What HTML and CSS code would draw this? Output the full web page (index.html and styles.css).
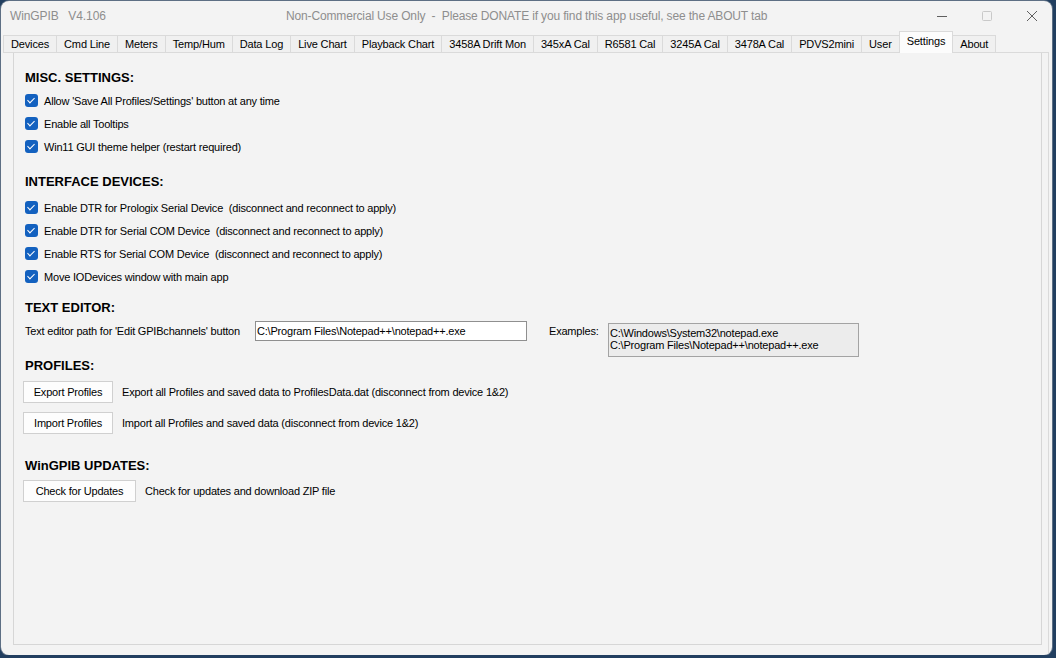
FILE: index.html
```html
<!DOCTYPE html>
<html lang="en">

<head>
    <meta charset="UTF-8">
    <meta name="viewport" content="width=device-width, initial-scale=1.0">
    <link rel="stylesheet" href="styles.css">
    <title>WinGPIB Settings</title>
</head>

<body>

    <div class="window">

        <div class="titlebar">
            <span class="app-title">WinGPIB   V4.106</span>
            <span class="notice">Non-Commercial Use Only  -  Please DONATE if you find this app useful, see the ABOUT tab</span>
            <div class="controls">
                <span class="ctl">
                    <svg width="12" height="12" viewBox="0 0 12 12"><path d="M1 6.5h10" stroke="#5f5f5f" stroke-width="1" /></svg>
                </span>
                <span class="ctl">
                    <svg width="12" height="12" viewBox="0 0 12 12"><rect x="1.5" y="1.5" width="9" height="9" rx="1" fill="none" stroke="#c9c9c9" stroke-width="1" /></svg>
                </span>
                <span class="ctl">
                    <svg width="12" height="12" viewBox="0 0 12 12"><path d="M1 1l10 10M11 1L1 11" stroke="#5f5f5f" stroke-width="1" /></svg>
                </span>
            </div>
        </div>

        <div class="tabs">
            <span class="tab">Devices</span>
            <span class="tab">Cmd Line</span>
            <span class="tab">Meters</span>
            <span class="tab">Temp/Hum</span>
            <span class="tab">Data Log</span>
            <span class="tab">Live Chart</span>
            <span class="tab">Playback Chart</span>
            <span class="tab">3458A Drift Mon</span>
            <span class="tab">345xA Cal</span>
            <span class="tab">R6581 Cal</span>
            <span class="tab">3245A Cal</span>
            <span class="tab">3478A Cal</span>
            <span class="tab">PDVS2mini</span>
            <span class="tab">User</span>
            <span class="tab active">Settings</span>
            <span class="tab">About</span>
        </div>

        <div class="tabpage">
            <div class="panel">

                <h2 class="section first">MISC. SETTINGS:</h2>
                <ul class="checks">
                    <li><span class="cb"></span>Allow 'Save All Profiles/Settings' button at any time</li>
                    <li><span class="cb"></span>Enable all Tooltips</li>
                    <li><span class="cb"></span>Win11 GUI theme helper (restart required)</li>
                </ul>

                <h2 class="section interface">INTERFACE DEVICES:</h2>
                <ul class="checks">
                    <li><span class="cb"></span>Enable DTR for Prologix Serial Device  (disconnect and reconnect to apply)</li>
                    <li><span class="cb"></span>Enable DTR for Serial COM Device  (disconnect and reconnect to apply)</li>
                    <li><span class="cb"></span>Enable RTS for Serial COM Device  (disconnect and reconnect to apply)</li>
                    <li><span class="cb"></span>Move IODevices window with main app</li>
                </ul>

                <h2 class="section editor">TEXT EDITOR:</h2>
                <div class="path-row">
                    <label class="path-label" for="editorPath">Text editor path for 'Edit GPIBchannels' button</label>
                    <input type="text" id="editorPath" class="path-input" value="C:\Program Files\Notepad++\notepad++.exe" />
                    <span class="examples-label">Examples:</span>
                    <div class="examples">C:\Windows\System32\notepad.exe<br>C:\Program Files\Notepad++\notepad++.exe</div>
                </div>

                <h2 class="section profiles">PROFILES:</h2>
                <div class="action-row">
                    <button class="btn">Export Profiles</button>
                    <span>Export all Profiles and saved data to ProfilesData.dat (disconnect from device 1&amp;2)</span>
                </div>
                <div class="action-row second">
                    <button class="btn">Import Profiles</button>
                    <span>Import all Profiles and saved data (disconnect from device 1&amp;2)</span>
                </div>

                <h2 class="section updates">WinGPIB UPDATES:</h2>
                <div class="action-row">
                    <button class="btn wide">Check for Updates</button>
                    <span>Check for updates and download ZIP file</span>
                </div>

            </div>
        </div>

    </div>

</body>

</html>
```

FILE: styles.css
```css
body {
    margin: 0;
    padding: 1px 0 0 1px;
    background-color: #223f60;
    font-family: 'Liberation Sans', Arial, sans-serif;
    color: #000;
}

.window {
    width: 1051px;
    height: 654px;
    background-color: #f3f3f3;
    border-radius: 8px;
    box-shadow: 0 0 0 1px #5d6f84;
    display: flex;
    flex-direction: column;
    overflow: hidden;
}

/* title bar */

.titlebar {
    height: 30px;
    display: flex;
    align-items: center;
    font-size: 12px;
    color: #8e8e8e;
    white-space: pre;
}

.app-title {
    width: 285px;
    padding-left: 9px;
    box-sizing: border-box;
    letter-spacing: -0.1px;
}

.notice {
    flex: 1;
    letter-spacing: -0.15px;
}

.controls {
    display: flex;
    gap: 5px;
    height: 30px;
}

.ctl {
    width: 40px;
    display: flex;
    align-items: center;
    justify-content: center;
}

/* tabs */

.tabs {
    height: 21px;
    display: flex;
    align-items: flex-end;
    padding-left: 2px;
    font-size: 11px;
    letter-spacing: -0.15px;
}

.tab {
    height: 17px;
    line-height: 16px;
    padding: 0 7px;
    background-color: #f0f0f0;
    border: 1px solid #dadada;
    border-bottom: none;
    margin-left: -1px;
    box-sizing: border-box;
}

.tab:first-child {
    margin-left: 0;
}

.tab.active {
    height: 22px;
    line-height: 19px;
    margin-bottom: -1px;
    padding: 0 7px;
    background-color: #fcfcfc;
    position: relative;
    z-index: 1;
}

.tabpage {
    flex: 1;
    margin: 0 3px 0 2px;
    border-top: 1px solid #dadada;
    border-right: 1px solid #dadada;
    display: flex;
    flex-direction: column;
}

.panel {
    flex: 1;
    margin: 0 6px 10px 10px;
    border: 1px solid #d6d6d6;
    border-top: none;
    padding: 17px 11px 0 11px;
    font-size: 11px;
    letter-spacing: -0.2px;
}

/* sections */

.section {
    margin: 0 0 5px 0;
    font-size: 13px;
    line-height: 16px;
    font-weight: bold;
    letter-spacing: 0;
}

.section.first {
    margin-bottom: 3px;
}

.section.interface {
    margin-top: 16px;
    margin-bottom: 6px;
}

.section.editor {
    margin-top: 12px;
}

.section.profiles {
    margin-top: 1px;
    margin-bottom: 7px;
}

.section.updates {
    margin-top: 24px;
    margin-bottom: 6px;
}

.checks {
    list-style: none;
    margin: 0;
    padding: 0;
}

.checks li {
    height: 23px;
    display: flex;
    align-items: center;
    gap: 6px;
    white-space: pre;
}

.cb {
    width: 13px;
    height: 13px;
    border-radius: 3px;
    background-color: #1361bf;
    position: relative;
    flex-shrink: 0;
}

.cb::after {
    content: '';
    position: absolute;
    left: 4px;
    top: 2px;
    width: 3px;
    height: 6px;
    border: solid #fff;
    border-width: 0 1px 1px 0;
    transform: rotate(45deg);
}

/* text editor row */

.path-row {
    margin-top: 5px;
    display: flex;
    align-items: flex-start;
}

.path-label {
    width: 230px;
    line-height: 20px;
}

.path-input {
    width: 272px;
    height: 20px;
    box-sizing: border-box;
    margin: 0;
    padding: 0 1px;
    border: 1px solid #8f8f8f;
    background-color: #fff;
    font-family: inherit;
    font-size: 11px;
    letter-spacing: -0.2px;
    color: #000;
}

.examples-label {
    width: 59px;
    margin-left: 22px;
    line-height: 20px;
}

.examples {
    width: 251px;
    height: 34px;
    box-sizing: border-box;
    margin-top: 2px;
    padding: 3px 1px 0 1px;
    border: 1px solid #a3a3a3;
    background-color: #ececec;
    line-height: 12px;
}

/* buttons */

.action-row {
    display: flex;
    align-items: center;
    gap: 9px;
    margin-left: -2px;
}

.action-row.second {
    margin-top: 9px;
}

.btn {
    width: 90px;
    height: 22px;
    padding: 0;
    margin: 0;
    background-color: #fdfdfd;
    border: 1px solid #d0d0d0;
    font-family: inherit;
    font-size: 11px;
    letter-spacing: -0.2px;
    color: #000;
}

.btn.wide {
    width: 113px;
}
```
